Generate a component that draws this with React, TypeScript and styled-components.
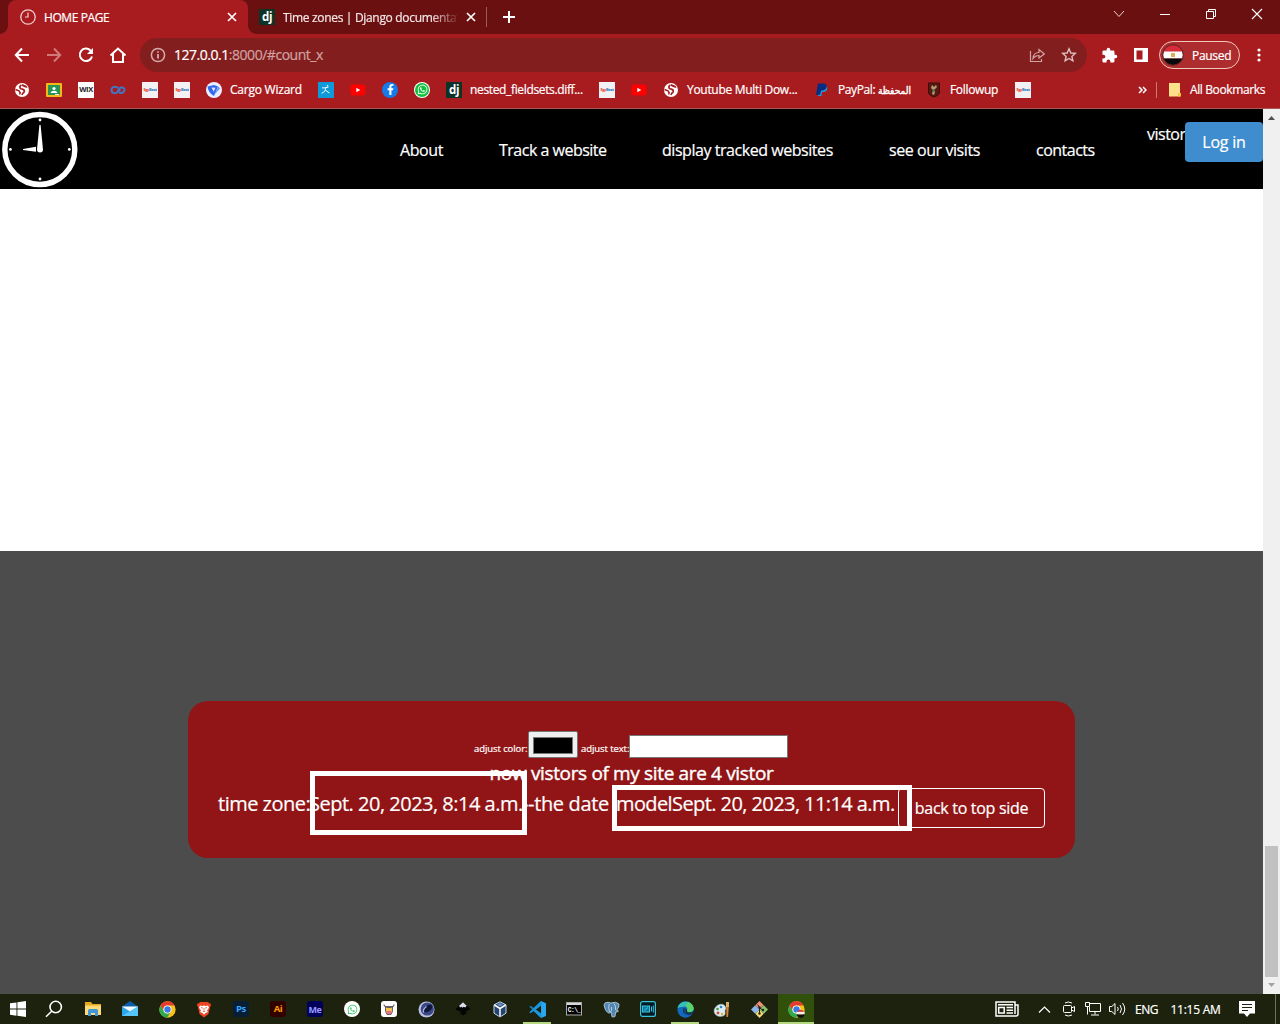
import React from 'react';
import styled, { createGlobalStyle, css } from 'styled-components';
import { FaWhatsapp, FaFacebookF } from 'react-icons/fa';

const GlobalStyle = createGlobalStyle`
  * { box-sizing: border-box; }
  body { margin: 0; overflow: hidden; font-family: "Open Sans", "Noto Sans", sans-serif; -webkit-text-stroke: 0.2px; }
  svg { display: block; flex: none; }
`;

const Screen = styled.div`
  width: 1280px;
  height: 1024px;
  display: flex;
  flex-direction: column;
  overflow: hidden;
`;

const Label = styled.span<{ $w?: number; $size?: number; $ls?: number; $color?: string; $weight?: number }>`
  flex: none;
  display: inline-block;
  width: ${p => (p.$w ? `${p.$w}px` : 'auto')};
  font-size: ${p => p.$size ?? 12}px;
  font-weight: ${p => p.$weight ?? 400};
  letter-spacing: ${p => p.$ls ?? 0}px;
  color: ${p => p.$color ?? '#fff'};
  white-space: nowrap;
`;

/* ---------- browser tabs ---------- */

const TabStrip = styled.div`
  height: 34px;
  flex: none;
  display: flex;
  padding-left: 8px;
  background: #6b1011;
`;

const Tab = styled.div<{ $active?: boolean }>`
  position: relative;
  width: ${p => (p.$active ? 240 : 238)}px;
  height: 34px;
  display: flex;
  align-items: center;
  padding: 0 ${p => (p.$active ? 10 : 9)}px 0 ${p => (p.$active ? 12 : 11)}px;
  gap: 8px;
  ${p => p.$active && css`
    background: #a81c1f;
    border-radius: 8px 8px 0 0;
    &::before, &::after {
      content: '';
      position: absolute;
      bottom: 0;
      width: 8px;
      height: 8px;
    }
    &::before { left: -8px; background: radial-gradient(circle at 0 0, transparent 7.5px, #a81c1f 8px); }
    &::after { right: -8px; background: radial-gradient(circle at 100% 0, transparent 7.5px, #a81c1f 8px); }
  `}
`;

const TabTitle = styled.div<{ $faded?: boolean; $ls: number }>`
  flex: 1;
  overflow: hidden;
  white-space: nowrap;
  font-size: 12px;
  letter-spacing: ${p => p.$ls}px;
  color: #fff;
  ${p => p.$faded && css`
    color: #f3e6e6;
    mask-image: linear-gradient(to right, #000 148px, transparent 177px);
  `}
`;

const TabDivider = styled.div`
  width: 1px;
  height: 20px;
  margin: 7px 0 0;
  background: #9a5b5c;
`;

const NewTab = styled.div`
  width: 44px;
  display: flex;
  align-items: center;
  justify-content: center;
`;

const WindowControls = styled.div`
  margin-left: auto;
  display: flex;
  height: 28px;
`;

const ControlButton = styled.div`
  width: 46px;
  display: flex;
  align-items: center;
  justify-content: center;
`;

/* ---------- toolbar ---------- */

const Toolbar = styled.div`
  height: 38px;
  flex: none;
  display: flex;
  align-items: center;
  padding: 4px 5px 0 6px;
  background: #a81c1f;
`;

const ToolButton = styled.div`
  width: 32px;
  display: flex;
  justify-content: center;
`;

const AddressBar = styled.div`
  width: 947px;
  height: 34px;
  margin: 0 6px;
  border-radius: 17px;
  background: #831e1f;
  display: flex;
  align-items: center;
  padding: 0 10px;
`;

const Url = styled.div`
  flex: 1;
  margin: -1px 0 0 8px;
  font-size: 14px;
  letter-spacing: -0.47px;
  color: #cfa3a3;
  b { font-weight: 400; color: #fff; }
`;

const AddressIcon = styled.div`
  margin-left: 16px;
`;

const Profile = styled.div`
  width: 81px;
  height: 28px;
  margin: 0 3px 0 2px;
  display: flex;
  align-items: center;
  gap: 8px;
  padding-left: 2px;
  border: 1px solid #f0c9bd;
  border-radius: 14px;
  background: #ad2d2f;
`;

/* ---------- bookmarks ---------- */

const Bookmarks = styled.div`
  height: 37px;
  flex: none;
  display: flex;
  align-items: center;
  padding: 0 14px 1px;
  background: #a81c1f;
  border-bottom: 1px solid #a35a50;
`;

const Bookmark = styled.div`
  display: flex;
  align-items: center;
  gap: 8px;
  margin-right: 16px;
`;

const Arabic = styled.bdi`
  font: 400 10px/1 "DejaVu Sans Condensed", "DejaVu Sans", sans-serif;
  font-stretch: condensed;
  letter-spacing: 0;
  -webkit-text-stroke: 0.4px;
`;

const Overflow = styled.div`
  margin-left: auto;
  display: flex;
  align-items: center;
`;

const BarDivider = styled.div`
  width: 1px;
  height: 16px;
  margin: 0 11px 0 9px;
  background: #cb7a70;
`;

const Folder = styled.div`
  margin-right: 8px;
`;

const Tile = styled.div<{ $bg: string; $fg: string; $size?: number; $fs: number; $round?: number }>`
  width: ${p => p.$size ?? 16}px;
  height: ${p => p.$size ?? 16}px;
  flex: none;
  display: flex;
  align-items: center;
  justify-content: center;
  overflow: hidden;
  border-radius: ${p => p.$round ?? 0}px;
  background: ${p => p.$bg};
  color: ${p => p.$fg};
  font-size: ${p => p.$fs}px;
  font-weight: 700;
  line-height: 1;
  letter-spacing: -0.4px;
  -webkit-text-stroke: 0;
`;

/* ---------- page ---------- */

const Viewport = styled.div`
  flex: 1;
  min-height: 0;
  display: flex;
`;

const Page = styled.main`
  width: 1263px;
  display: flex;
  flex-direction: column;
  background: #fff;
`;

const Navbar = styled.nav`
  height: 80px;
  flex: none;
  display: flex;
  background: #000;
`;

const NavLinks = styled.div`
  display: flex;
  align-items: center;
  gap: 56px;
  margin-left: 322px;
  padding-top: 1px;
`;

const Account = styled.div`
  display: flex;
  margin-left: auto;
  padding-top: 13px;
`;

const Visitor = styled.div`
  padding-top: 1px;
`;

const LoginButton = styled.button`
  width: 78px;
  height: 40px;
  padding: 0;
  border: 0;
  border-radius: 4px;
  background: #3f8dcf;
  color: #fff;
  font: 16px "Open Sans", sans-serif;
  letter-spacing: -0.2px;
`;

const Footer = styled.footer`
  height: 443px;
  flex: none;
  margin-top: auto;
  display: flex;
  justify-content: center;
  align-items: flex-start;
  padding-top: 150px;
  background: #4c4c4c;
`;

const Card = styled.section`
  position: relative;
  width: 887px;
  height: 157px;
  border-radius: 20px;
  background: #911516;
  padding: 30px 30px 0;
  display: flex;
  flex-direction: column;
  color: #fff;
`;

const Controls = styled.div`
  height: 27px;
  display: flex;
  align-items: flex-end;
  padding-left: 256px;
`;

const FieldLabel = styled.label<{ $w: number }>`
  width: ${p => p.$w}px;
  flex: none;
  padding-bottom: 3px;
  font-size: 9.5px;
  letter-spacing: -0.08px;
  line-height: 13px;
  white-space: nowrap;
`;

const ColorInput = styled.div`
  width: 50px;
  height: 27px;
  padding: 5px 4px;
  border: 1px solid #767676;
  border-radius: 2px;
  background: #efefef;
  margin-right: 3px;
  &::after {
    content: '';
    display: block;
    height: 100%;
    background: #000;
    border: 1px solid #777;
  }
`;

const TextInput = styled.div`
  width: 159px;
  height: 23px;
  background: #fff;
  border: 1px solid #767676;
`;

const VisitorCount = styled.div`
  height: 30px;
  line-height: 30px;
  text-align: center;
  font-size: 19px;
  letter-spacing: -0.35px;
  white-space: nowrap;
  -webkit-text-stroke: 0.4px;
`;

const DateRow = styled.div`
  height: 40px;
  display: flex;
  line-height: 31px;
`;

const BackButton = styled.button`
  width: 147px;
  height: 40px;
  margin-left: auto;
  padding: 0;
  border: 1px solid #fff;
  border-radius: 4px;
  background: transparent;
  color: #fff;
  font: 16px "Open Sans", sans-serif;
  letter-spacing: -0.3px;
`;

const Highlight = styled.div<{ $x: number; $y: number; $w: number; $h: number }>`
  position: absolute;
  left: ${p => p.$x}px;
  top: ${p => p.$y}px;
  width: ${p => p.$w}px;
  height: ${p => p.$h}px;
  border: 5px solid #fff;
`;

const Scrollbar = styled.div`
  width: 17px;
  display: flex;
  flex-direction: column;
  align-items: center;
  justify-content: space-between;
  padding: 7px 0;
  background: #f0f0f0;
`;

const Thumb = styled.div`
  width: 13px;
  height: 131px;
  margin: auto 0 6px;
  background: #c1c1c1;
`;

/* ---------- taskbar ---------- */

const Taskbar = styled.div`
  height: 30px;
  flex: none;
  display: flex;
  background: #1c220d;
`;

const TaskCell = styled.div<{ $mr?: number; $state?: 'open' | 'active' }>`
  width: 36px;
  margin-right: ${p => p.$mr ?? 1}px;
  height: 30px;
  flex: none;
  display: flex;
  align-items: center;
  justify-content: center;
  ${p => p.$state === 'open' && css`
    background: linear-gradient(#b4d780, #b4d780) center bottom / 28px 2px no-repeat;
  `}
  ${p => p.$state === 'active' && css`
    background: linear-gradient(#b4d780, #b4d780) center bottom / 36px 2px no-repeat, #30500c;
  `}
`;

const Tray = styled.div`
  margin: 0 4px 0 auto;
  display: flex;
  align-items: center;
  padding-right: 8px;
  border-right: 1px solid #6d7163;
`;

const TrayItem = styled.div<{ $w: number }>`
  width: ${p => p.$w}px;
  display: flex;
  justify-content: center;
`;

/* ---------- drawings ---------- */

const Close = () => (
  <svg width="12" height="12" viewBox="0 0 12 12" stroke="#fff" strokeWidth="1.7"><path d="M2 2l8 8M10 2l-8 8" /></svg>
);

const Clock = () => (
  <svg width="16" height="16" viewBox="0 0 16 16" fill="none" stroke="#f3cfcf">
    <circle cx="8" cy="8" r="7.2" strokeWidth="1.3" /><path d="M8 3.5V8H5" strokeWidth="1.2" />
  </svg>
);

const BigClock = () => (
  <svg width="78" height="80" viewBox="0 0 78 80">
    <circle cx="39.8" cy="40.5" r="35" fill="none" stroke="#fff" strokeWidth="5.4" />
    <g fill="#fff">
      <circle cx="40" cy="11" r="1.4" /><circle cx="40" cy="70" r="1.4" /><circle cx="10.4" cy="40.4" r="1.4" /><circle cx="69.3" cy="40.4" r="1.4" />
      <path d="M39.4 16h1.2L43 40.5a3 3 0 0 1-6 0z" /><path d="M23 40l13-2.3v5L23 41z" />
    </g>
  </svg>
);

const Globe = () => (
  <svg width="16" height="16" viewBox="0 0 16 16">
    <circle cx="8" cy="8" r="7" fill="#fff" />
    <path d="M7.500 3C5.500 3.800 5.300 6 7 6.800l2 .6c2 .8 1.600 3-.2 3.800L8 13" fill="none" stroke="#a81c1f" strokeWidth="1.700" />
    <path d="M1.500 7.500l3.500 1.300 1.200 1.800-.6 1.900" fill="none" stroke="#a81c1f" strokeWidth="1.500" />
    <path d="M8 2l4.500 1.700 1 2.300-3-.7L8 4z" fill="#a81c1f" />
  </svg>
);

const Classroom = () => (
  <svg width="16" height="16" viewBox="0 0 16 16">
    <rect y="1" width="16" height="14" rx="1" fill="#f5ba18" /><rect x="2" y="3" width="12" height="10" fill="#289455" />
    <circle cx="8" cy="6.500" r="1.600" fill="#fff" /><path d="M4.700 11c.3-3 6.300-3 6.600 0z" fill="#fff" /><path d="M9 12h4v1H9z" fill="#e8e8e8" />
  </svg>
);

const Loops = () => (
  <svg width="16" height="16" viewBox="0 0 16 16" fill="none" stroke="#3f78c8" strokeWidth="2">
    <path d="M8 6.200C6 3.800 1.500 4.500 1.500 8s4.500 4.200 6 2l1.500-3c1.500-2.500 5.500-1.700 5.500 1s-3.500 4-5.500 2M10.500 8H9" />
  </svg>
);

const EgyBest = () => (
  <Tile $bg="#f2f2f4" $fg="#e8412c" $fs={4}><span>Egy</span><Label $size={4} $ls={-0.3} $weight={700} $color="#2672ba">Best</Label></Tile>
);

const Cargo = () => (
  <svg width="16" height="16" viewBox="0 0 16 16">
    <circle cx="8" cy="8" r="8" fill="#e9eeff" />
    <path d="M1.500 4.500L8 3l4 1.500-4 9.500C4.500 12 2 9 1.500 4.500z" fill="#3268ed" /><path d="M12.500 4.500l1.500 2-5.500 6z" fill="#6b8df5" />
    <path d="M5.500 5.500l4 .3-1.800 4z" fill="#dfe8ff" />
  </svg>
);

const Jumper = () => (
  <svg width="16" height="16" viewBox="0 0 16 16">
    <rect width="16" height="16" fill="#0e9ad8" /><path d="M4 5.800c2.500.4 4.500-.2 6.500-.8M7.700 5.500c0 2.500-1.200 5-4 5.700M7.500 8.300l4 2.700" stroke="#fff" fill="none" /><circle cx="9.500" cy="3.800" r=".8" fill="#fff" />
  </svg>
);

const YouTube = () => (
  <svg width="16" height="16" viewBox="0 0 16 16"><rect x=".5" y="2.500" width="15" height="11" rx="3" fill="#f00" /><path d="M6.300 5.700v4.600L10.300 8z" fill="#fff" /></svg>
);

const PayPal = () => (
  <svg width="16" height="16" viewBox="0 0 16 16">
    <path d="M5.500 4h6.500c2 1 1.800 5.500-2.500 6H8L7.300 14H4z" fill="#1f9be0" />
    <path d="M4 1.500h5.500c3.500 0 3.800 3.200 2.500 5-1 1.500-2.500 2-4.800 2L6 12.800H2z" fill="#052c80" />
  </svg>
);

const Round = styled.div<{ $bg: string; $size?: number }>`
  width: ${p => p.$size ?? 16}px;
  height: ${p => p.$size ?? 16}px;
  border-radius: 50%;
  background: ${p => p.$bg};
  display: flex;
  align-items: center;
  justify-content: center;
  overflow: hidden;
`;

const Shield = () => (
  <svg width="16" height="16" viewBox="0 0 16 16">
    <path d="M2.500 1h11v9c0 3-3 4-5.500 5-2.500-1-5.500-2-5.500-5z" fill="#5b1812" stroke="#3b0f0b" />
    <path d="M6 3l2 2 2-2 1 2-3 3 1 2-1 3-2-1 1-4-2-2z" fill="#b89a72" /><circle cx="7.500" cy="8.500" r="1.200" fill="#3d7a4a" />
  </svg>
);

const Flag = () => (
  <svg width="22" height="22" viewBox="0 0 22 22">
    <defs><clipPath id="flagClip"><circle cx="11" cy="11" r="10" /></clipPath></defs>
    <g clipPath="url(#flagClip)"><path fill="#d92c3a" d="M0 0h22v7.500H0z" /><path fill="#fff" d="M0 7.500h22v7H0z" /><path fill="#0a0a0a" d="M0 14.500h22V22H0z" /></g>
    <path d="M9 9h4v4H9z" fill="#d2b45a" /><circle cx="11" cy="11" r="10.300" fill="none" stroke="#5b2325" />
  </svg>
);

const Note = () => (
  <svg width="14" height="16" viewBox="0 0 14 16"><path d="M1 1h11v13.500H1z" fill="#ffe08a" /><path d="M10 11h3v3.500h-3z" fill="#f5c644" /></svg>
);

const Windows = () => (
  <svg width="16" height="16" viewBox="0 0 16 16" fill="#fff"><path d="M0 2.300l6.500-.9v6.200H0zM7.400 1.200L16 0v7.600H7.400zM0 8.500h6.500v6.200L0 13.800zM7.400 8.500H16V16l-8.600-1.200z" /></svg>
);

const Search = () => (
  <svg width="18" height="18" viewBox="0 0 18 18" fill="none" stroke="#fff" strokeWidth="1.600"><circle cx="10.700" cy="7" r="5.700" /><path d="M6.700 11.200L1 16.800" /></svg>
);

const Explorer = () => (
  <svg width="18" height="16" viewBox="0 0 18 16">
    <path d="M1 1h6l1.500 2H17v11H1z" fill="#e6a91d" /><path d="M1 4.500h16V14H1z" fill="#fcdb78" />
    <path d="M4 15V9.500Q4 8 5.500 8h7Q14 8 14 9.500V15h-3v-3H7v3z" fill="#4196d8" />
  </svg>
);

const Mail = () => (
  <svg width="18" height="16" viewBox="0 0 18 16">
    <path d="M1 5.500L9 0l8 5.500z" fill="#0a5da8" /><path d="M1 5.500h16V15H1z" fill="#2ba5e8" /><path d="M1 5.500h16L9 10.500z" fill="#f3f8fc" /><path d="M1 15L17 5.500V15z" fill="#55c4f7" />
  </svg>
);

const Chrome = ({ badge }: { badge?: boolean }) => (
  <svg width="17" height="17" viewBox="0 0 24 24">
    <circle cx="12" cy="12" r="11.500" fill="#fbc116" />
    <path d="M2 6.300A11.500 11.500 0 0 1 22 6.300H12a5.700 5.700 0 0 0-5 8.500z" fill="#e33b2e" />
    <path d="M2 6.300A11.500 11.500 0 0 0 11.500 23.500l5.400-8.600a5.700 5.700 0 0 1-9.900 0z" fill="#2da94f" />
    <circle cx="12" cy="12" r="5.700" fill="#fff" /><circle cx="12" cy="12" r="4.500" fill="#3b79e8" />
    {badge && <g><path d="M12 15h11.500v4H12z" fill="#f6eeee" /><path d="M12.500 15q5-5 10.500 0z" fill="#d43538" /><path d="M12 19h11.500q-1.500 5-5.700 5T12 19z" fill="#111" /></g>}
  </svg>
);

const Brave = () => (
  <svg width="16" height="17" viewBox="0 0 16 17">
    <path d="M4 1h8l1 1.300 1.500.3.500 2-1 1.500-1.500 7L8 16.500 3.500 13 2 6 1 4.600l.5-2L3 2.300z" fill="#ef4423" />
    <path d="M4 4.500l2.200.4L8 4.500l1.800.4 2.200-.4 1 2.200-2 2.800 1 1.500-2.500 1L8 13.700 6.500 12 4 11l1-1.500-2-2.800z" fill="#fff" />
    <path d="M5 6.500l2 .7M11 6.500l-2 .7M8 7v3M6.800 10.500h2.400" stroke="#ef4423" strokeWidth=".7" />
  </svg>
);

const Cow = () => (
  <svg width="16" height="16" viewBox="0 0 16 16">
    <rect width="16" height="16" rx="3" fill="#fff" /><path d="M4.500 6h7v4.500L10 13.500H6l-1.500-3z" fill="#f3c24c" stroke="#4c414b" strokeWidth=".8" />
    <path d="M5.200 10h5.600l-1 3H6.200z" fill="#e27190" /><path d="M3 3.500q0 2.300 2 2.300h6q2 0 2-2.300" stroke="#4c414b" fill="none" /><path d="M6 5.500h4v1.500H6z" fill="#625b64" />
  </svg>
);

const Cinema = () => (
  <svg width="17" height="17" viewBox="0 0 17 17">
    <circle cx="8.500" cy="8.500" r="8" fill="#b9c0dc" /><circle cx="9.300" cy="8" r="6.600" fill="#3a4888" />
    <ellipse cx="10" cy="7.500" rx="5" ry="3" transform="rotate(-38 10 7.500)" fill="#0f1738" /><path d="M5.500 11.500q-1-3 3-6" stroke="#a7b2e5" fill="none" strokeWidth="1.300" />
  </svg>
);

const Inkscape = () => (
  <svg width="16" height="16" viewBox="0 0 16 16">
    <path d="M8 1l7 6.500q.8 1.500-2.500 1.700l-1.800 1.600 1.300 1.200-4 2.500-3.300-2.400 2-1-3.500-1.300Q.2 9 1 7.500z" fill="#050505" />
    <path d="M8 1.300l3.700 3.500-1.500 1.800-1.500-.8-1.200 1-1-1-1.500.6-.8-1.600z" fill="#d8dced" />
  </svg>
);

const VBox = () => (
  <svg width="14" height="17" viewBox="0 0 14 17">
    <path d="M7 .8l6 3v8.400l-6 3.800-6-3.800V3.800z" fill="#24436f" stroke="#c6d5e4" /><path d="M1.500 4L7 7.500 12.500 4M7 7.500V15" stroke="#fff" strokeWidth="1.500" fill="none" /><path d="M4 3.500L7 2l3 1.500-3 2z" fill="#6a92c4" />
  </svg>
);

const Code = () => (
  <svg width="17" height="17" viewBox="0 0 24 24">
    <path d="M17 0L24 3v18l-7 3z" fill="#2aa7ef" /><path d="M17 0L6.500 10 2.300 6.800.5 8l16.500 16v-6.300L9.500 12 17 6.300z" fill="#1183cb" /><path d="M17 24L6.500 14l-4.200 3.200L.5 16 17 0v6.300L9.500 12l7.500 5.700z" fill="#1b95dc" />
  </svg>
);

const Terminal = () => (
  <svg width="16" height="14" viewBox="0 0 16 14">
    <rect x=".5" y=".5" width="15" height="12.500" fill="#000" stroke="#a9a9a9" /><path d="M1 1h14v2H1z" fill="#d7d7d7" />
    <text x="1.800" y="9.700" fontSize="6.300" fontWeight="700" fontFamily="Liberation Mono, monospace" letterSpacing="-.6" fill="#fff">C:\_</text>
  </svg>
);

const Elephant = () => (
  <svg width="17" height="17" viewBox="0 0 17 17">
    <path d="M2 2q3-1.500 6 0 5-2 8 1 .5 3-2.500 6.500l2 .5q-1.500 1.500-3 1.200L12 15.500q-2 1-3.200 0l-.3-4-2 .5-1.500-.2Q2 10 1 4z" fill="#4f86b2" stroke="#b5cad9" strokeWidth=".9" />
    <path d="M6.300 3q-1.300 3 0 7M11 2.500q2 2 1.500 6.500M6 10.500q2 .5 2.500-1V6" fill="none" stroke="#d3e0e9" strokeWidth=".8" />
  </svg>
);

const Screencast = () => (
  <svg width="16" height="16" viewBox="0 0 16 16" fill="none" stroke="#36c3df">
    <rect x=".6" y=".6" width="14.800" height="14.800" rx="2" fill="#061820" strokeWidth="1.200" /><rect x="2.500" y="5" width="7" height="6" fill="#14759a" /><path d="M4 9.500l4-3M11.500 5.500v5M13.300 4.500v7" />
  </svg>
);

const Edge = () => (
  <svg width="17" height="17" viewBox="0 0 24 24">
    <circle cx="12" cy="12" r="11.500" fill="#1469bd" />
    <path d="M.8 10C3 0 13-.8 19 3c5 4 6 10 1 12-3 1-7 0-6-2 2-3-1-6-5-5-4 .2-7 1-8.200 2z" fill="#35bfb6" />
    <path d="M15 1c7 2 10 8 8 12-2 3-7 3-9 1 2-2 1-5-1-6z" fill="#5bd36a" /><path d="M9 10c-3 7 3 11 10 10l3-2c-4 1-11 0-11-5 0-1 0-2 1-3z" fill="#123f79" /><path d="M12 11q3 1 2 4 4 3 9 0l-1.500 3q-9 .5-9.500-4z" fill="#1c220d" />
  </svg>
);

const Palette = () => (
  <svg width="18" height="17" viewBox="0 0 18 17">
    <path d="M2 7c2-4 8-5 10-2s0 3 0 5 1 4-2 5c-6 2-11-3-8-8z" fill="#dcebf4" stroke="#9bb8c8" strokeWidth=".6" />
    <circle cx="4.500" cy="8" r="1.300" fill="#469944" /><circle cx="8" cy="6" r="1.300" fill="#2d84c9" /><circle cx="5" cy="12" r="1.400" fill="#d84a36" /><circle cx="9" cy="13" r="1.200" fill="#e7aa22" />
    <path d="M13 1h3v5h-3z" fill="#d7ad70" /><path d="M13.200 6h2.600L15 16h-1.500z" fill="#d88131" />
  </svg>
);

const Git = () => (
  <svg width="17" height="17" viewBox="0 0 17 17">
    <path d="M8.500 0l4.200 4.200-4.200 4.200-4.200-4.200z" fill="#f0907c" /><path d="M12.800 4.300L17 8.500l-4.200 4.200-4.200-4.200z" fill="#8bc26a" /><path d="M4.200 4.300l4.200 4.200-4.200 4.200L0 8.500z" fill="#8bb4ea" /><path d="M8.500 8.600l4.200 4.200L8.500 17l-4.200-4.200z" fill="#f2dc78" />
    <path d="M6.500 3.500l2 3v6M8.500 7l3.500 2" stroke="#21261c" fill="none" /><g fill="#21261c"><circle cx="8.500" cy="6.500" r="1.200" /><circle cx="8.500" cy="12.500" r="1.200" /><circle cx="12" cy="9" r="1.200" /></g>
  </svg>
);

const News = () => (
  <svg width="24" height="16" viewBox="0 0 24 16" fill="none" stroke="#fff" strokeWidth="1.500">
    <path d="M20 13V1H1v14h20q2 0 2-2V4h-3" /><rect x="3.700" y="6.500" width="5.500" height="5.500" /><path d="M3 3.800h15M11.500 6.500H18M11.500 9.200H18M11.500 12H18" />
  </svg>
);

const PuzzlePath = 'M20.500 11H19V7a2 2 0 0 0-2-2h-4V3.500a2.500 2.500 0 0 0-5 0V5H4a2 2 0 0 0-2 2v3.800h1.500a2.700 2.700 0 0 1 0 5.400H2V20c0 1.100.9 2 2 2h3.800v-1.500a2.700 2.700 0 0 1 5.400 0V22H17a2 2 0 0 0 2-2v-4h1.500a2.500 2.500 0 0 0 0-5z';

/* ---------- content ---------- */

type BookmarkItem = { icon: React.ReactNode; text?: React.ReactNode; w?: number; ls?: number };

const Django = () => <Tile $bg="#0d3226" $fg="#fff" $fs={11.5}>dj</Tile>;

const bookmarks: BookmarkItem[] = [
  { icon: <Globe /> },
  { icon: <Classroom /> },
  { icon: <Tile $bg="#fff" $fg="#222" $fs={7.5}>WIX</Tile> },
  { icon: <Loops /> },
  { icon: <EgyBest /> },
  { icon: <EgyBest /> },
  { icon: <Cargo />, text: 'Cargo Wizard', w: 72, ls: -0.23 },
  { icon: <Jumper /> },
  { icon: <YouTube /> },
  { icon: <Round $bg="#147be8"><FaFacebookF size={11} color="#fff" /></Round> },
  { icon: <Round $bg="#fff"><Round $bg="#12bf3f" $size={14}><FaWhatsapp size={11} color="#fff" /></Round></Round> },
  { icon: <Django />, text: 'nested_fieldsets.diff...', w: 113, ls: -0.35 },
  { icon: <EgyBest /> },
  { icon: <YouTube /> },
  { icon: <Globe />, text: 'Youtube Multi Dow...', w: 111, ls: -0.3 },
  { icon: <PayPal />, text: <>PayPal: <Arabic>المحفظة</Arabic></>, w: 72, ls: -0.4 },
  { icon: <Shield />, text: 'Followup', w: 49, ls: -0.33 },
  { icon: <EgyBest /> },
];

const navLinks = [
  { text: 'About', w: 43, ls: -0.4 },
  { text: 'Track a website', w: 107, ls: -0.5 },
  { text: 'display tracked websites', w: 171, ls: -0.45 },
  { text: 'see our visits', w: 91, ls: -0.43 },
  { text: 'contacts', w: 59, ls: -0.5 },
];

const tasks: { icon: React.ReactNode; state?: 'open' | 'active' }[] = [
  { icon: <Explorer /> },
  { icon: <Mail /> },
  { icon: <Chrome /> },
  { icon: <Brave /> },
  { icon: <Tile $bg="#071e36" $fg="#31a8ff" $fs={9.5} $round={3}>Ps</Tile> },
  { icon: <Tile $bg="#330000" $fg="#ff9a00" $fs={9.5} $round={3}>Ai</Tile> },
  { icon: <Tile $bg="#00005b" $fg="#9999ff" $fs={9} $round={3}>Me</Tile> },
  { icon: <Round $bg="#fff"><FaWhatsapp size={11} color="#38c76b" /></Round> },
  { icon: <Cow /> },
  { icon: <Cinema /> },
  { icon: <Inkscape /> },
  { icon: <VBox /> },
  { icon: <Code />, state: 'open' },
  { icon: <Terminal /> },
  { icon: <Elephant /> },
  { icon: <Screencast /> },
  { icon: <Edge />, state: 'open' },
  { icon: <Palette /> },
  { icon: <Git /> },
  { icon: <Chrome badge />, state: 'active' },
];

export default function App() {
  return (
    <Screen>
      <GlobalStyle />
      <TabStrip>
        <Tab $active>
          <Clock /><TabTitle $ls={-0.42}>HOME PAGE</TabTitle><Close />
        </Tab>
        <Tab>
          <Django /><TabTitle $faded $ls={-0.32}>Time zones | Django documentation</TabTitle><Close />
        </Tab>
        <TabDivider />
        <NewTab><svg width="12" height="12" viewBox="0 0 12 12" stroke="#fff" strokeWidth="2"><path d="M6 0v12M0 6h12" /></svg></NewTab>
        <WindowControls>
          <ControlButton><svg width="12" height="8" viewBox="0 0 12 8" fill="none" stroke="#e9d4d4"><path d="M1 1l5 5.500L11 1" /></svg></ControlButton>
          <ControlButton><svg width="10" height="2" viewBox="0 0 10 2"><path d="M0 1h10v1H0z" fill="#fff" /></svg></ControlButton>
          <ControlButton><svg width="12" height="12" viewBox="0 0 12 12" fill="none" stroke="#fff"><path d="M1.500 3.500h7v7h-7zM3.500 3.500v-2h7v7h-2" /></svg></ControlButton>
          <ControlButton><svg width="12" height="12" viewBox="0 0 12 12" stroke="#fff" strokeWidth="1.100"><path d="M1 1l10 10M11 1L1 11" /></svg></ControlButton>
        </WindowControls>
      </TabStrip>

      <Toolbar>
        <ToolButton><svg width="16" height="16" viewBox="0 0 16 16" fill="none" stroke="#fff" strokeWidth="2"><path d="M15 8H2M8 1.500L1.800 8 8 14.500" /></svg></ToolButton>
        <ToolButton><svg width="16" height="16" viewBox="0 0 16 16" fill="none" stroke="#d07a7a" strokeWidth="2"><path d="M1 8h13M8 1.500L14.200 8 8 14.500" /></svg></ToolButton>
        <ToolButton><svg width="16" height="16" viewBox="0 0 16 16" fill="none" stroke="#fff" strokeWidth="2"><path d="M14 9.500A6.200 6.200 0 1 1 12.500 3.500L14 5" /><path d="M15 1v6H9z" fill="#fff" stroke="none" /></svg></ToolButton>
        <ToolButton><svg width="18" height="16" viewBox="0 0 18 16" fill="none" stroke="#fff" strokeWidth="2"><path d="M1.500 8.500L9 1.500l7.500 7M4 7v8h10V7" /></svg></ToolButton>
        <AddressBar>
          <svg width="16" height="16" viewBox="0 0 16 16" fill="none" stroke="#d5abab" strokeWidth="1.500"><circle cx="8" cy="8" r="6.600" /><path d="M8 7v4.500M8 4.300v1.500" strokeWidth="1.800" /></svg>
          <Url><b>127.0.0.1</b>:8000/#count_x</Url>
          <AddressIcon><svg width="16" height="16" viewBox="0 0 16 16" fill="none" stroke="#cfa3a3" strokeWidth="1.200"><path d="M1.500 4v10.500h11V12M4 11.500c.3-4 2.500-6 6-6V2.500L15.300 7 10 11V8.500c-3 0-4.500.8-6 3z" /></svg></AddressIcon>
          <AddressIcon><svg width="16" height="16" viewBox="0 0 16 16" fill="none" stroke="#e0c0c0" strokeWidth="1.400"><path d="M8 1.800l1.800 4.200 4.500.4-3.400 3 1 4.400L8 11.500l-3.900 2.300 1-4.400-3.400-3 4.500-.4z" /></svg></AddressIcon>
        </AddressBar>
        <ToolButton><svg width="17" height="17" viewBox="0 0 24 24" fill="#fff"><path d={PuzzlePath} /></svg></ToolButton>
        <ToolButton><svg width="16" height="16" viewBox="0 0 16 16"><path d="M1 1h14v14H1zM3.500 3.500v9H9.500v-9z" fill="#fff" fillRule="evenodd" /></svg></ToolButton>
        <Profile><Flag /><Label $size={12} $ls={-0.3}>Paused</Label></Profile>
        <ToolButton><svg width="4" height="14" viewBox="0 0 4 14" fill="#fff"><circle cx="2" cy="2" r="1.600" /><circle cx="2" cy="7" r="1.600" /><circle cx="2" cy="12" r="1.600" /></svg></ToolButton>
      </Toolbar>

      <Bookmarks>
        {bookmarks.map((b, i) => (
          <Bookmark key={i}>
            {b.icon}
            {b.text && <Label $w={b.w} $ls={b.ls}>{b.text}</Label>}
          </Bookmark>
        ))}
        <Overflow>
          <svg width="9" height="8" viewBox="0 0 9 8" fill="none" stroke="#fff" strokeWidth="1.500"><path d="M1 1l3 3-3 3M5 1l3 3-3 3" /></svg>
          <BarDivider />
          <Folder><Note /></Folder>
          <Label $w={76} $ls={-0.38}>All Bookmarks</Label>
        </Overflow>
      </Bookmarks>

      <Viewport>
        <Page>
          <Navbar>
            <BigClock />
            <NavLinks>
              {navLinks.map(l => <Label key={l.text} $w={l.w} $size={16} $ls={l.ls}>{l.text}</Label>)}
            </NavLinks>
            <Account>
              <Visitor><Label $w={38} $size={16} $ls={-0.5}>vistor</Label></Visitor>
              <LoginButton>Log in</LoginButton>
            </Account>
          </Navbar>
          <Footer>
            <Card>
              <Controls>
                <FieldLabel $w={54}>adjust color:</FieldLabel>
                <ColorInput />
                <FieldLabel $w={48}>adjust text:</FieldLabel>
                <TextInput />
              </Controls>
              <VisitorCount>now vistors of my site are 4 vistor</VisitorCount>
              <DateRow>
                <Label $w={91} $size={20} $ls={-0.5}>time zone:</Label>
                <Label $w={213} $size={20} $ls={-0.5}>Sept. 20, 2023, 8:14 a.m.</Label>
                <Label $w={94} $size={20} $ls={-0.35}>--the date</Label>
                <Label $w={56} $size={20} $ls={-0.6}>model</Label>
                <Label $w={224} $size={20} $ls={-0.58}>Sept. 20, 2023, 11:14 a.m.</Label>
                <BackButton>back to top side</BackButton>
              </DateRow>
              <Highlight $x={122} $y={70} $w={217} $h={64} />
              <Highlight $x={424} $y={84} $w={300} $h={46} />
            </Card>
          </Footer>
        </Page>
        <Scrollbar>
          <svg width="7" height="4" viewBox="0 0 7 4"><path d="M0 4l3.500-4L7 4z" fill="#505050" /></svg>
          <Thumb />
          <svg width="7" height="4" viewBox="0 0 7 4"><path d="M0 0l3.500 4L7 0z" fill="#a3a3a3" /></svg>
        </Scrollbar>
      </Viewport>

      <Taskbar>
        <TaskCell $mr={0}><Windows /></TaskCell>
        <TaskCell $mr={3}><Search /></TaskCell>
        {tasks.map((t, i) => <TaskCell key={i} $state={t.state}>{t.icon}</TaskCell>)}
        <Tray>
          <TrayItem $w={46}><News /></TrayItem>
          <TrayItem $w={28}><svg width="13" height="7" viewBox="0 0 13 7" fill="none" stroke="#fff" strokeWidth="1.200"><path d="M1 6.500l5.500-5.500L12 6.500" /></svg></TrayItem>
          <TrayItem $w={22}><svg width="12" height="16" viewBox="0 0 12 16" fill="none" stroke="#fff"><rect x=".5" y="4.500" width="8" height="7" rx="1" /><path d="M8.500 7l3-1.500v5L8.500 9M2 2q3-2 7 0M2 14q3 2 7 0" /></svg></TrayItem>
          <TrayItem $w={25}><svg width="16" height="14" viewBox="0 0 16 14" fill="none" stroke="#fff"><path d="M5 1.500h10.500v8H4.500V5M10 9.500v3M6 13h8M.5.500h4v4h-4zM2.500 4.500v8" /></svg></TrayItem>
          <TrayItem $w={24}><svg width="17" height="14" viewBox="0 0 17 14" fill="none" stroke="#fff"><path d="M.5 4.500h2.300L6 1.500v11L2.800 9.500H.5zM8.500 5q1.500 2 0 4M11 3q3 4 0 8M13.500 1q4.500 6 0 12" /></svg></TrayItem>
          <TrayItem $w={35}><Label $ls={-0.5}>ENG</Label></TrayItem>
          <TrayItem $w={63}><Label $ls={-0.25}>11:15 AM</Label></TrayItem>
          <TrayItem $w={40}><svg width="16" height="16" viewBox="0 0 16 16"><path d="M0 0h16v12.500h-5L8 16l-3-3.500H0z" fill="#fff" /><path d="M3 3.500h10M3 6.500h10M3 9.500h6" stroke="#1c220d" /></svg></TrayItem>
        </Tray>
      </Taskbar>
    </Screen>
  );
}
